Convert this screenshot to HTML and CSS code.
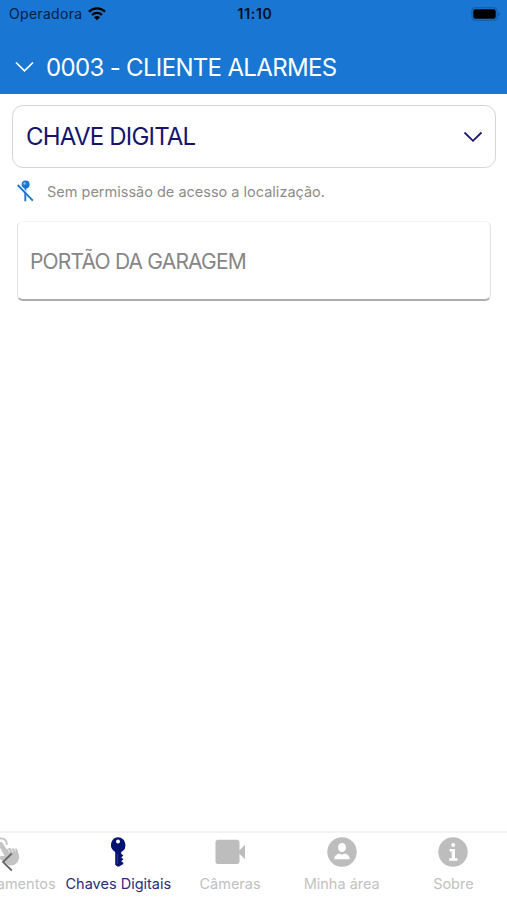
FILE: index.html
```
<!DOCTYPE html>
<html lang="pt-BR">
<head>
    <meta charset="UTF-8">
    <meta name="viewport" content="width=device-width, initial-scale=1.0">
    <title>Chaves Digitais</title>
    <link rel="stylesheet" href="styles.css">
</head>
<body>
    <header>
        <div class="status-bar">
            <div class="carrier">
                <span class="carrier-name">Operadora</span>
                <svg class="wifi" viewBox="0 0 18 14" width="18" height="14">
                    <path d="M1 4.7C5.5 .2 12.5 .2 17 4.7" fill="none" stroke="#000" stroke-width="2.3"/>
                    <path d="M4 8C6.8 5.2 11.2 5.2 14 8" fill="none" stroke="#000" stroke-width="2.2"/>
                    <path d="M5.9 10.2Q9 7.7 12.1 10.2L9 13.3Z"/>
                </svg>
            </div>
            <span class="clock">11:10</span>
            <svg class="battery" viewBox="0 0 30 14" width="30" height="14">
                <rect x=".9" y=".7" width="25.2" height="12.6" rx="3.6" fill="none" stroke="#125ba5" stroke-width="1.1"/>
                <rect x="2.3" y="2.2" width="22.4" height="9.6" rx="2.2"/>
                <path d="M27.4 5.2Q29 5.6 29 7T27.4 8.8Z" fill="#125ba5"/>
            </svg>
        </div>
        <div class="title-bar">
            <svg viewBox="0 0 20 12" width="20" height="12">
                <path d="M1 1.5L9.5 9.8L18 1.5" fill="none" stroke="#fff" stroke-width="1.7"/>
            </svg>
            <h1>0003 - CLIENTE ALARMES</h1>
        </div>
    </header>

    <main>
        <button type="button" class="select">
            <span>CHAVE DIGITAL</span>
            <svg viewBox="0 0 20 12" width="20" height="12">
                <path d="M1.5 1.5L10 9.8L18.5 1.5" fill="none" stroke="#1a1872" stroke-width="1.8"/>
            </svg>
        </button>

        <div class="notice">
            <svg viewBox="0 0 18 22" width="18" height="22">
                <path d="M8.3 8V21.3" stroke="#1976d2" stroke-width="1.9"/>
                <circle cx="8.6" cy="4.6" r="4" fill="#1976d2"/>
                <circle cx="7.5" cy="3.5" r="1.3" fill="#8fc0ef"/>
                <path d="M1.8 4.2L16.6 19.4" stroke="#fff" stroke-width="1.2"/>
                <path d="M.7 5L15.8 20.6" stroke="#1976d2" stroke-width="1.8"/>
            </svg>
            <span>Sem permissão de acesso a localização.</span>
        </div>

        <div class="card">PORTÃO DA GARAGEM</div>
    </main>

    <nav>
        <a class="tab">
            <svg viewBox="0 0 30 30" width="30" height="30">
                <path d="M5 3.5C9 -.8 15.5 1.8 14.6 8.2" fill="none" stroke="#c4c4c4" stroke-width="1.8"/>
                <path d="M7.3 5.7Q9.3 4 10.8 6.3L14.8 12.5L16.2 11.5Q18 10.2 19.5 12.2Q21 10.2 22.5 12Q24.8 10.6 25.6 13.5L27 18.5Q27.5 24.5 23 27.5Q19 29.8 15 27L8 22Q6.7 20 9 19L12.7 19L6.8 8.2Q6.3 6.6 7.3 5.7Z" fill="#c4c4c4"/>
                <path d="M16.2 12.5L17.4 15.5M19.5 12.2L20.6 15M22.5 12L23.4 14.6" stroke="#fff" stroke-width=".7"/>
            </svg>
            <span>Acionamentos</span>
        </a>
        <a class="tab active">
            <svg viewBox="0 0 30 30" width="30" height="30">
                <path d="M15 .3A7.8 7.8 0 0 1 18.2 15V16.7L20.4 18.5L18.2 20.4L20.4 22.3L18.2 24.2L20.3 25.8V27L16.1 29.6H14.3L12.2 27.8V15A7.8 7.8 0 0 1 15 .3Z" fill="#03136f"/>
                <circle cx="15" cy="4.6" r="2" fill="#fff"/>
                <path d="M14.3 17V27" stroke="#53609b" stroke-width=".6"/>
            </svg>
            <span>Chaves Digitais</span>
        </a>
        <a class="tab">
            <svg viewBox="0 0 30 30" width="30" height="30">
                <rect x=".5" y="2.7" width="24" height="24.3" rx="2.8" fill="#bdbdbd"/>
                <path d="M24 13.8L30 7.8V22.3L24 16.5Z" fill="#bdbdbd"/>
            </svg>
            <span>Câmeras</span>
        </a>
        <a class="tab">
            <svg viewBox="0 0 30 30" width="30" height="30">
                <circle cx="15" cy="15" r="14.7" fill="#bdbdbd"/>
                <ellipse cx="15" cy="10.5" rx="4" ry="4.5" fill="#fff"/>
                <path d="M7.2 22.2Q7.2 18.5 12 16.6Q15 18.5 18 16.6Q22.8 18.5 22.8 22.2Z" fill="#fff"/>
            </svg>
            <span>Minha área</span>
        </a>
        <a class="tab">
            <svg viewBox="0 0 30 30" width="30" height="30">
                <circle cx="15" cy="15" r="14.7" fill="#bdbdbd"/>
                <circle cx="15.2" cy="7.9" r="2" fill="#fff"/>
                <path d="M11.6 12.1H17V21.3H19.4V23.7H11.2V21.3H13.7V14.4H11.6Z" fill="#fff"/>
            </svg>
            <span>Sobre</span>
        </a>
        <svg class="scroll-back" viewBox="0 0 14 20" width="14" height="20">
            <path d="M11.8 1.5L3 10L11.8 18.5" fill="none" stroke="#666" stroke-width="1.8"/>
        </svg>
    </nav>
</body>
</html>
```
FILE: styles.css
```
* {
    box-sizing: border-box;
}

body {
    font-family: Inter, 'Liberation Sans', sans-serif;
    margin: 0;
    height: 100vh;
    display: flex;
    flex-direction: column;
    background-color: #ffffff;
    overflow: hidden;
}

svg {
    display: block;
    flex-shrink: 0;
}

header {
    height: 94px;
    background-color: #1976d2;
}

.status-bar {
    height: 28px;
    padding: 0 6px 1px 9px;
    display: grid;
    grid-template-columns: 1fr auto 1fr;
    align-items: center;
    font-size: 14px;
}

.carrier {
    display: flex;
    align-items: center;
    gap: 6px;
    color: #06213f;
}

.carrier-name {
    letter-spacing: 0.3px;
}

.clock {
    font-weight: 600;
    letter-spacing: 0.7px;
    color: #03101f;
}

.battery {
    justify-self: end;
}

.title-bar {
    height: 66px;
    padding: 12px 15px 0;
    display: flex;
    align-items: center;
    gap: 11px;
    color: #ffffff;
}

h1 {
    margin: 0;
    font-size: 24px;
    font-weight: 400;
    letter-spacing: -0.67px;
}

main {
    flex: 1;
    padding: 11px 11px 11px 12px;
}

.select {
    width: 100%;
    height: 63px;
    padding: 0 12px 0 13px;
    display: flex;
    align-items: center;
    justify-content: space-between;
    border: 1.5px solid #d6d6d6;
    border-radius: 11px;
    background-color: #ffffff;
    color: #15156e;
    font-family: inherit;
    font-size: 24px;
    letter-spacing: -0.8px;
}

.notice {
    height: 46px;
    padding-left: 5px;
    display: flex;
    align-items: center;
    gap: 12px;
    color: #8c8c8c;
    font-size: 14.5px;
}

.card {
    height: 80px;
    margin: 7px 5px 0;
    padding: 1px 0 0 12px;
    display: flex;
    align-items: center;
    border: 1px solid #e2e2e2;
    border-top-color: #f4f4f4;
    border-bottom: 2px solid #adadad;
    border-radius: 6px;
    color: #868686;
    font-size: 21px;
    letter-spacing: -0.8px;
}

nav {
    position: relative;
    height: 69px;
    display: flex;
    padding-top: 4px;
    border-top: 2px solid #f3f3f3;
}

.tab {
    flex: 0 0 111.7px;
    display: flex;
    flex-direction: column;
    align-items: center;
    gap: 7px;
    color: #c2c2c2;
    font-size: 14.5px;
    line-height: 20px;
}

/* the tab row is scrolled a little, so the first tab is cut off */
.tab:first-child {
    margin-left: -49.2px;
}

.tab.active {
    color: #2a2d7c;
}

.scroll-back {
    position: absolute;
    left: 0;
    top: 19px;
}
```
